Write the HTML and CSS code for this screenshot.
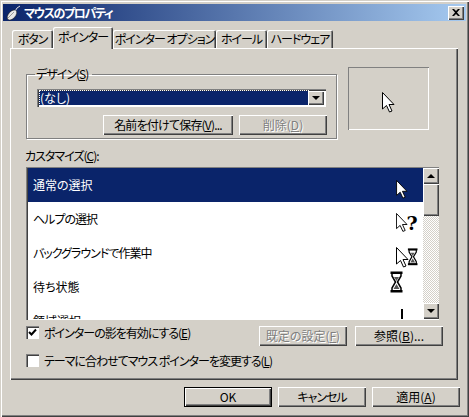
FILE: index.html
```html
<!DOCTYPE html>
<html lang="ja">
<head>
    <meta charset="UTF-8">
    <title>マウスのプロパティ</title>
    <link rel="stylesheet" href="styles.css">
</head>
<body>
    <div class="window">
        <div class="titlebar">
            <svg class="title-icon" width="16" height="16" viewBox="0 0 16 16">
                <ellipse cx="7" cy="10" rx="3.500" ry="6" transform="rotate(42 7 10)" fill="#e8e8e8" stroke="#222" stroke-width="0.600"/>
                <path d="M3 13 L9 7" stroke="#999" stroke-width="1"/>
                <path d="M10.500 5.500 L12 3 L15 1" fill="none" stroke="#ddd" stroke-width="1"/>
            </svg>
            <span class="title-text">マウスのプロパティ</span>
            <span class="close-btn">
                <svg width="8" height="7" viewBox="0 0 8 7"><path d="M0 0 L2 0 L4 2 L6 0 L8 0 L5 3.500 L8 7 L6 7 L4 5 L2 7 L0 7 L3 3.500 Z" fill="#000"/></svg>
            </span>
        </div>

        <div class="tabs">
            <div class="tab tab-first">ボタン</div>
            <div class="tab tab-active">ポインター</div>
            <div class="tab tab-options">ポインター オプション</div>
            <div class="tab tab-wheel">ホイール</div>
            <div class="tab tab-hw">ハードウェア</div>
        </div>

        <div class="pane">
            <div class="top-row">
                <fieldset class="design">
                    <legend>デザイン(<u>S</u>)</legend>
                    <div class="combo">
                        <div class="combo-value"><span class="focus-text">(なし)</span></div>
                        <span class="scroll-btn combo-btn"><i class="arrow-down"></i></span>
                    </div>
                    <div class="design-buttons">
                        <div class="btn btn-save"><span>名前を付けて保存(<u>V</u>)...</span></div>
                        <div class="btn btn-delete disabled"><span>削除(<u>D</u>)</span></div>
                    </div>
                </fieldset>
                <div class="preview">
                    <svg class="preview-arrow" width="13" height="21" viewBox="0 0 13 21"><use href="#arrow"/></svg>
                </div>
            </div>

            <div class="custom-label">カスタマイズ(<u>C</u>):</div>

            <div class="list">
                <div class="rows">
                    <div class="row selected">
                        <span>通常の選択</span>
                        <svg class="cursor cursor-sel" width="12" height="19" viewBox="0 0 13 21"><use href="#arrow"/></svg>
                    </div>
                    <div class="row">
                        <span class="kana">ヘルプの選択</span>
                        <svg class="cursor cursor-combo" width="26" height="21" viewBox="0 0 26 21">
                            <use href="#arrow" transform="scale(0.920)"/>
                            <text x="10.500" y="17" class="help-mark">?</text>
                        </svg>
                    </div>
                    <div class="row">
                        <span class="kana">バックグラウンドで作業中</span>
                        <svg class="cursor cursor-combo" width="26" height="21" viewBox="0 0 26 21">
                            <use href="#arrow"/>
                            <use href="#glass" transform="translate(11.500 1) scale(0.800)"/>
                        </svg>
                    </div>
                    <div class="row">
                        <span>待ち状態</span>
                        <svg class="cursor cursor-wait" width="13" height="22" viewBox="0 0 13 22"><use href="#glass"/></svg>
                    </div>
                    <div class="row">
                        <span>領域選択</span>
                        <svg class="cursor cursor-beam" width="2" height="20" viewBox="0 0 2 20"><rect width="2" height="20" fill="#000"/></svg>
                    </div>
                </div>
                <div class="scrollbar">
                    <span class="scroll-btn"><i class="arrow-up"></i></span>
                    <span class="scroll-thumb"></span>
                    <span class="scroll-track"></span>
                    <span class="scroll-btn"><i class="arrow-down"></i></span>
                </div>
            </div>

            <div class="options">
                <div class="option-row">
                    <label class="check-label">
                        <span class="checkbox">
                            <svg width="9" height="9" viewBox="0 0 9 9"><path d="M1 4 L3.500 6.500 L8 1.500" fill="none" stroke="#000" stroke-width="2"/></svg>
                        </span>
                        <span>ポインターの影を有効にする(<u>E</u>)</span>
                    </label>
                    <div class="btn btn-small disabled"><span>既定の設定(<u>F</u>)</span></div>
                    <div class="btn btn-small btn-browse"><span>参照(<u>B</u>)...</span></div>
                </div>
                <label class="check-label check-theme">
                    <span class="checkbox"></span>
                    <span>テーマに合わせてマウス ポインターを変更する(<u>L</u>)</span>
                </label>
            </div>
        </div>

        <div class="footer">
            <div class="btn btn-small btn-default">OK</div>
            <div class="btn btn-small kana">キャンセル</div>
            <div class="btn btn-small"><span>適用(<u>A</u>)</span></div>
        </div>
    </div>

    <!-- shared cursor shapes -->
    <svg class="defs" width="0" height="0">
        <defs>
            <path id="arrow" d="M0.500 0.500 L0.500 17 L4.500 13.500 L7.500 20 L10 19 L7 12.500 L12 12.500 Z" fill="#fff" stroke="#000" stroke-width="1"/>
            <g id="glass">
                <path d="M2 2 L11 2 L11 5 L7.500 11 L11 17 L11 20 L2 20 L2 17 L5.500 11 L2 5 Z" fill="#fff" stroke="#000" stroke-width="1.500"/>
                <rect x="0.500" y="0.500" width="12" height="2.500" fill="#000"/>
                <rect x="0.500" y="19" width="12" height="2.500" fill="#000"/>
                <path d="M4 6 L9 6 L6.500 10 Z M3.500 18 L6.500 13 L9.500 18 Z" fill="#555"/>
            </g>
        </defs>
    </svg>
</body>
</html>
```

FILE: styles.css
```css
* {
    box-sizing: border-box;
}
body {
    margin: 0;
    background-color: #d4d0c8;
    font-family: "Noto Sans CJK JP", "Liberation Sans", sans-serif;
    font-size: 12px;
    font-feature-settings: "palt";
    color: #000;
    line-height: 16px;
}
u {
    text-underline-offset: 1px;
}
.defs {
    display: block;
}
/* kana runs are narrower in the original UI font */
.kana {
    letter-spacing: -1px;
}
.window {
    width: 469px;
    height: 417px;
    padding: 4px 3px 0 3px;
    background-color: #d4d0c8;
    box-shadow: inset 1px 1px 0 #d4d0c8, inset 2px 2px 0 #fff, inset -1px -1px 0 #404040, inset -2px -2px 0 #808080;
    overflow: hidden;
}

/* title bar */
.titlebar {
    height: 17px;
    display: flex;
    align-items: center;
    padding: 0 2px 0 2px;
    background: linear-gradient(90deg, #0a246a 0%, #a6caf0 100%);
}
.title-icon {
    flex: none;
}
.title-text {
    margin-left: 3px;
    color: #fff;
    font-weight: 700;
    font-size: 12px;
    letter-spacing: -1.400px;
}
.close-btn {
    margin-left: auto;
    width: 16px;
    height: 14px;
    display: flex;
    align-items: center;
    justify-content: center;
    background-color: #d4d0c8;
    box-shadow: inset 1px 1px 0 #fff, inset -1px -1px 0 #404040, inset -2px -2px 0 #808080;
}

/* tabs */
.tabs {
    display: flex;
    align-items: flex-end;
    height: 27px;
    padding-left: 9px;
    position: relative;
    z-index: 1;
}
.tab {
    height: 18px;
    padding: 1px 0 0 0;
    text-align: center;
    white-space: nowrap;
    letter-spacing: -1px;
    border-radius: 2px 2px 0 0;
    box-shadow: inset 1px 1px 0 #fff, inset -1px 0 0 #404040, inset -2px 0 0 #808080;
}
.tab-first {
    width: 41px;
}
.tab-active {
    width: 60px;
    height: 22px;
    margin-bottom: -1px;
    padding-top: 2px;
    background-color: #d4d0c8;
}
.tab-options {
    width: 103px;
}
.tab-wheel {
    width: 51px;
}
.tab-hw {
    width: 66px;
}

/* main pane */
.pane {
    width: 448px;
    height: 332px;
    margin-left: 7px;
    padding: 19px 0 0 16px;
    box-shadow: inset 1px 1px 0 #fff, inset -1px -1px 0 #404040, inset -2px -2px 0 #808080;
}
.top-row {
    display: flex;
    gap: 11px;
    align-items: flex-start;
}
.design {
    width: 310px;
    height: 72px;
    margin: 0;
    padding: 8px 10px 0 10px;
    border: 1px solid #808080;
    box-shadow: 1px 1px 0 #fff, inset 1px 1px 0 #fff;
}
.design legend {
    padding: 0 4px 0 1px;
    margin-left: -2px;
    line-height: 14px;
    letter-spacing: -1px;
}
.combo {
    display: flex;
    width: 289px;
    height: 18px;
    padding: 2px;
    background-color: #fff;
    box-shadow: inset 1px 1px 0 #808080, inset 2px 2px 0 #404040, inset -1px -1px 0 #fff;
}
.combo-value {
    flex: 1;
    background-color: #0a246a;
    color: #fff;
    line-height: 14px;
    padding-left: 1px;
}
.focus-text {
    outline: 1px dotted #fff;
    display: inline-block;
    width: 100%;
}
.design-buttons {
    display: flex;
    justify-content: flex-end;
    gap: 6px;
    margin-top: 8px;
}
.btn {
    display: flex;
    align-items: center;
    justify-content: center;
    height: 20px;
    background-color: #d4d0c8;
    box-shadow: inset 1px 1px 0 #fff, inset -1px -1px 0 #404040, inset -2px -2px 0 #808080;
}
.btn-save {
    width: 130px;
    letter-spacing: -0.800px;
}
.btn-delete {
    width: 88px;
    margin-right: -1px;
}
.btn-small {
    width: 88px;
}
.disabled {
    color: #808080;
    text-shadow: 1px 1px 0 #fff;
}
.preview {
    width: 81px;
    height: 63px;
    display: flex;
    align-items: center;
    justify-content: center;
    box-shadow: inset 1px 1px 0 #808080, inset -1px -1px 0 #fff;
}
.preview-arrow {
    margin-top: 8px;
}
.custom-label {
    margin: 9px 0 0 -1px;
    height: 19px;
    letter-spacing: -1px;
}

/* cursor list */
.list {
    display: flex;
    width: 413px;
    height: 153px;
    padding: 1px 0 0 1px;
    background-color: #fff;
    box-shadow: inset 1px 1px 0 #808080, inset 2px 2px 0 #404040, inset -1px -1px 0 #fff;
    overflow: hidden;
}
.rows {
    flex: 1;
    min-width: 0;
    height: 151px;
    overflow: hidden;
    margin-left: 1px;
}
.row {
    display: flex;
    align-items: center;
    justify-content: space-between;
    height: 34px;
    padding-left: 5px;
}
.row.selected {
    background-color: #0a246a;
    color: #fff;
}
.cursor {
    flex: none;
    align-self: flex-start;
}
.cursor-sel {
    margin: 12px 15px 0 0;
}
.cursor-combo {
    margin: 11px 1px 0 0;
}
.cursor-wait {
    margin: 1px 20px 0 0;
}
.cursor-beam {
    margin: 5px 20px 0 0;
}
.help-mark {
    font-family: "DejaVu Serif", serif;
    font-weight: 700;
    font-size: 19px;
}
.scrollbar {
    width: 16px;
    display: flex;
    flex-direction: column;
    flex: none;
    margin-bottom: 1px;
}
.scroll-btn {
    display: flex;
    align-items: center;
    justify-content: center;
    width: 16px;
    height: 16px;
    flex: none;
    background-color: #d4d0c8;
    box-shadow: inset 1px 1px 0 #fff, inset -1px -1px 0 #404040, inset -2px -2px 0 #808080;
}
.scroll-thumb {
    height: 32px;
    flex: none;
    background-color: #d4d0c8;
    box-shadow: inset 1px 1px 0 #fff, inset -1px -1px 0 #404040, inset -2px -2px 0 #808080;
}
.scroll-track {
    flex: 1;
    background-color: #e8e6e2;
    background-image: repeating-conic-gradient(#d4d0c8 0 25%, #fff 0 50%);
    background-size: 2px 2px;
}
.combo-btn {
    height: 14px;
}
.arrow-up,
.arrow-down {
    width: 0;
    height: 0;
    border-left: 4px solid transparent;
    border-right: 4px solid transparent;
}
.arrow-up {
    border-bottom: 4px solid #000;
}
.arrow-down {
    border-top: 4px solid #000;
}

/* checkboxes */
.options {
    margin-top: 6px;
}
.option-row {
    display: flex;
    align-items: flex-start;
}
.check-label {
    display: flex;
    align-items: center;
    gap: 5px;
    height: 13px;
    white-space: nowrap;
    letter-spacing: -1px;
}
.option-row .check-label {
    width: 233px;
}
.check-theme {
    margin-top: 8px;
}
.checkbox {
    display: flex;
    align-items: center;
    justify-content: center;
    width: 13px;
    height: 13px;
    flex: none;
    background-color: #fff;
    box-shadow: inset 1px 1px 0 #808080, inset 2px 2px 0 #404040, inset -1px -1px 0 #fff;
}
.btn-browse {
    margin-left: 8px;
}

/* dialog buttons */
.footer {
    display: flex;
    justify-content: flex-end;
    gap: 6px;
    margin-top: 7px;
    padding-right: 6px;
}
.btn-default {
    outline: 1px solid #000;
    outline-offset: -1px;
    box-shadow: inset 2px 2px 0 #fff, inset -2px -2px 0 #404040, inset -3px -3px 0 #808080;
}
```
